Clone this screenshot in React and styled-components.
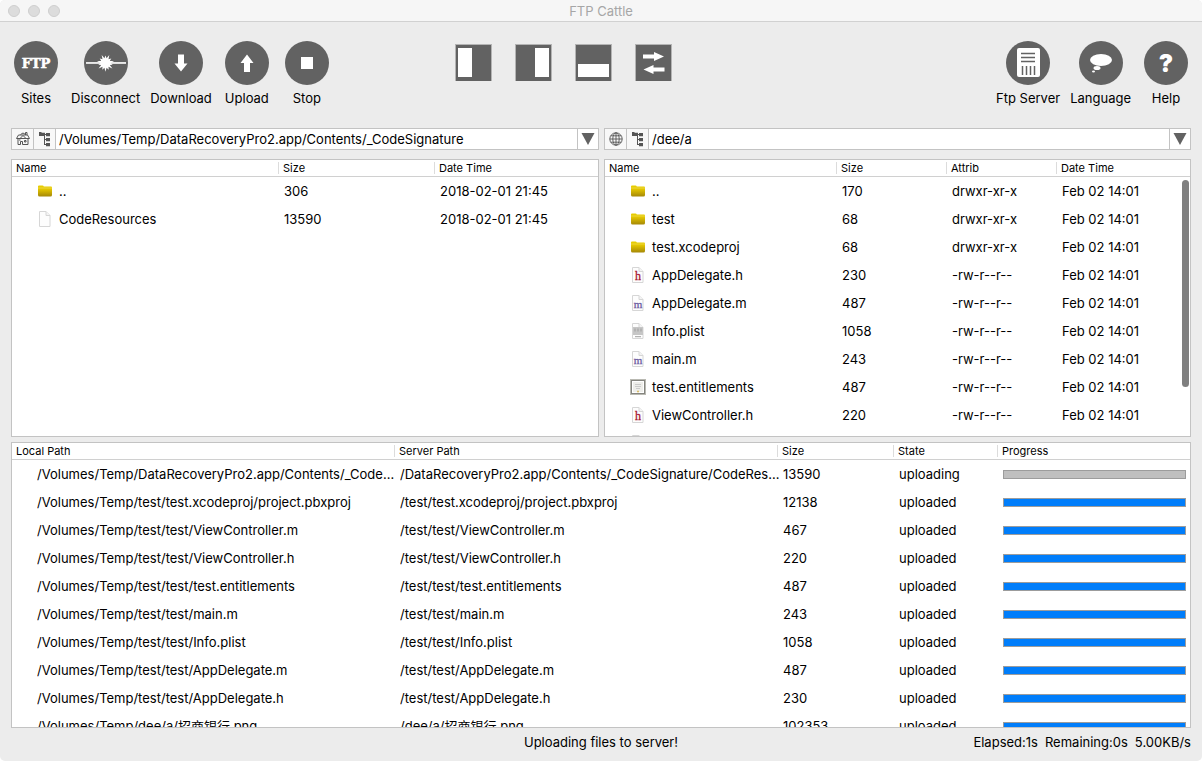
import React from "react";
import styled, { createGlobalStyle } from "styled-components";

const GlobalStyle = createGlobalStyle`
  *, *::before, *::after { box-sizing: border-box; }
  body {
    margin: 0;
    background: #fff;
    color: #000;
    font-family: Inter, "Noto Sans CJK SC", sans-serif;
    font-size: 13px;
    line-height: 16px;
  }
  button, input { font: inherit; color: inherit; }
`;

const Window = styled.div`
  display: flex;
  flex-direction: column;
  height: 100vh;
  min-height: 420px;
  background: #ececec;
  border-radius: 5px;
  overflow: hidden;
`;

const TitleBar = styled.header`
  display: grid;
  grid-template-columns: 1fr auto 1fr;
  align-items: center;
  flex: none;
  height: 22px;
  padding: 0 8px;
  background: #f6f6f6;
  border-bottom: 1px solid #d1d1d1;
`;

const Lights = styled.div`
  display: flex;
  gap: 8px;
`;

const Light = styled.button`
  width: 12px;
  height: 12px;
  padding: 0;
  border: 1px solid #cecece;
  border-radius: 50%;
  background: #dcdcdc;
`;

const Title = styled.h1`
  margin: 0;
  font-size: 13px;
  font-weight: 400;
  color: #a6a6a6;
`;

const Toolbar = styled.nav`
  display: flex;
  flex: none;
  align-items: flex-start;
  height: 106px;
  padding: 19px 11px 0;
`;

const ToolGroup = styled.div`
  display: flex;
  gap: 10px;
  margin-left: ${(p) => (p.$end ? "auto" : "0")};
`;

const ToolButton = styled.button`
  display: flex;
  flex-direction: column;
  align-items: center;
  gap: 5px;
  min-width: 50px;
  padding: 0;
  border: 0;
  background: none;
`;

const ViewGroup = styled.div`
  display: flex;
  gap: 23px;
  margin: 3px 0 0 123px;
`;

const ViewButton = styled.button`
  display: block;
  width: 37px;
  height: 37px;
  padding: 0;
  border: 0;
  background: none;

  svg { display: block; }
`;

const Main = styled.main`
  display: grid;
  flex: 1;
  min-height: 0;
  grid-template-rows: 22px minmax(0, 292fr) minmax(0, 286fr);
  padding: 0 11px;
`;

const Split = styled.div`
  display: grid;
  grid-template-columns: minmax(0, 588fr) minmax(0, 587fr);
  gap: 5px;
  min-height: 0;
`;

const Lists = styled(Split)`
  padding: 9px 0 5px;
`;

const PathBar = styled.div`
  display: flex;
  height: 22px;
  border: 1px solid #c3c3c3;
  background: #fff;
`;

const PathButton = styled.button`
  display: grid;
  place-items: center;
  flex: none;
  width: ${(p) => (p.$last ? 21 : 22)}px;
  padding: 0;
  border: solid #c3c3c3;
  border-width: 0 ${(p) => (p.$last ? 0 : 1)}px 0 ${(p) => (p.$last ? 1 : 0)}px;
  background: ${(p) => (p.$last ? "#fff" : "#f8f8f8")};
`;

const PathInput = styled.input`
  flex: 1;
  min-width: 0;
  padding: 0 3px;
  border: 0;
  outline: 0;
  background: #fff;
`;

const Panel = styled.section`
  position: relative;
  min-height: 0;
  overflow: hidden;
  border: 1px solid #c3c3c3;
  background: #fff;
`;

const ScrollThumb = styled.div`
  position: absolute;
  top: 20px;
  right: 1px;
  width: 7px;
  height: 207px;
  border-radius: 4px;
  background: #7f7f7f;
`;

const Table = styled.table`
  width: 100%;
  table-layout: fixed;
  border-collapse: separate;
  border-spacing: 0;
`;

const HeadCell = styled.th`
  position: relative;
  height: 17px;
  padding: 0 4px;
  border-bottom: 1px solid #d0d0d0;
  font-size: 11px;
  font-weight: 400;
  line-height: 16px;
  text-align: left;

  &:not(:last-child)::after {
    content: "";
    position: absolute;
    top: 2px;
    bottom: 2px;
    right: 0;
    width: 1px;
    background: #dcdcdc;
  }
`;

const Cell = styled.td`
  height: 28px;
  padding: 0 ${(p) => p.$end || 0}px 0 ${(p) => p.$indent || 5}px;
  white-space: nowrap;
`;

/* Long paths may use part of the next cell's left padding before they are elided. */
const PathText = styled.div`
  margin-right: -3px;
  overflow: hidden;
  text-overflow: ellipsis;
`;

const FileName = styled.div`
  display: flex;
  align-items: center;
  gap: 6px;

  svg { flex: none; }
`;

const Bar = styled.progress`
  display: block;
  width: 100%;
  height: 9px;
  appearance: none;
  border: 1px solid #9c9c9c;
  background: #bfbfbf;

  &::-webkit-progress-bar { background: #bfbfbf; }
  &::-webkit-progress-value { background: #007dfa; }
`;

const StatusBar = styled.footer`
  display: grid;
  grid-template-columns: 1fr auto 1fr;
  align-items: center;
  flex: none;
  height: 33px;
  padding: 0 11px 5px;
`;

const Stats = styled.div`
  display: flex;
  justify-content: flex-end;
  gap: 7px;
`;

/* Toolbar drawings: a 44px disc with a white symbol on it. */
function Disc({ children }) {
  return (
    <svg width="44" height="44" viewBox="0 0 44 44" aria-hidden="true">
      <circle cx="22" cy="22" r="22" fill="#626262" />
      <g fill="#fff">{children}</g>
    </svg>
  );
}

const burst = Array.from({ length: 28 }, (_, i) => {
  const angle = (i * Math.PI) / 14;
  const r = i % 2 ? 4.8 : i % 4 ? 8.8 : 7.4;
  return `${(21.5 + r * Math.sin(angle)).toFixed(2)},${(22 - r * Math.cos(angle)).toFixed(2)}`;
}).join(" ");

const discs = {
  sites: (
    <text x="22" y="27" textAnchor="middle" fontFamily="'DejaVu Serif', serif" fontWeight="700" fontSize="13" stroke="#fff" strokeWidth="0.500">FTP</text>
  ),
  disconnect: (
    <>
      <rect x="2" y="21" width="40" height="2" fill="#c8c8c8" />
      <rect x="2" y="21.400" width="40" height="1" />
      <polygon points={burst} />
    </>
  ),
  download: <path d="M19 13.500h6v9h3.500L22 30.500l-6.500-8H19z" />,
  upload: <path d="M19 31h6v-9h3.500L22 13.500l-6.500 8.500H19z" />,
  stop: <rect x="16" y="16" width="12" height="12" />,
  server: (
    <>
      <rect x="11" y="7" width="23" height="29" rx="2" />
      <path d="M15 12.500h14M15 16.500h14M15 20.500h14" stroke="#626262" strokeWidth="1.500" />
      <path d="M16.500 25v9M20.500 25v9M24.500 25v9M28.500 25v9" stroke="#626262" strokeWidth="1.500" />
    </>
  ),
  language: (
    <>
      <ellipse cx="22" cy="19" rx="11" ry="6" />
      <ellipse cx="18" cy="27" rx="3.500" ry="2" />
      <ellipse cx="14.500" cy="30.500" rx="1.500" ry="1" />
    </>
  ),
  help: (
    <text x="22" y="31" textAnchor="middle" fontFamily="Inter, sans-serif" fontWeight="900" fontSize="24">?</text>
  ),
};

function Tool({ icon, label }) {
  return (
    <ToolButton type="button">
      <Disc>{discs[icon]}</Disc>
      <span>{label}</span>
    </ToolButton>
  );
}

const views = {
  "Local pane": <rect x="3" y="4" width="14" height="29" />,
  "Server pane": <rect x="20" y="4" width="14" height="29" />,
  "Queue pane": <rect x="3" y="20" width="31" height="13" />,
  "Swap panes": (
    <path d="M8 10.500h11V8l10 4.500-10 4.500v-2.500H8zM29.500 27.500h-11V30l-10-4.500 10-4.500v2.500h11z" />
  ),
};

function View({ name }) {
  return (
    <ViewButton type="button" aria-label={name}>
      <svg width="37" height="37" viewBox="0 0 37 37">
        <rect width="37" height="37" fill="#b4b4b4" />
        <rect x="1" y="1" width="35" height="36" fill="#626262" />
        <g fill="#fff">{views[name]}</g>
      </svg>
    </ViewButton>
  );
}

const HomeIcon = () => (
  <svg width="14" height="14" viewBox="0 0 14 14" fill="none" stroke="#555" aria-hidden="true">
    <path d="M0.500 6.500 2.500 3h9l2 3.500zM9.500 3V0.500h1.500V3M4.500 2.500 7 1l2.500 1.500M2 6.500v6h2.500v-3h2v3H12v-6" />
    <path d="M4 6.500 7 3.500l3 3M8.500 8.500h1.500v1.500H8.500zM3 8h1.500" />
  </svg>
);

const TreeIcon = () => (
  <svg width="12" height="16" viewBox="0 0 12 16" fill="#555" aria-hidden="true">
    <path d="M0 1h2l1 .8h3V5H0zM7 2h4v3.200H7zM7 7h4v3.200H7zM7 12h4v3.200H7z" />
    <path d="M5.500 4v9.500M5 8.500h3M5 13.500h3M5 3.500h3" fill="none" stroke="#555" />
  </svg>
);

const GlobeIcon = () => (
  <svg width="14" height="14" viewBox="0 0 14 14" fill="none" stroke="#555" strokeWidth="0.900" aria-hidden="true">
    <circle cx="7" cy="7" r="6.200" />
    <ellipse cx="7" cy="7" rx="3.200" ry="6.200" />
    <path d="M7 .8v12.400M.8 7h12.400M1.800 3.800h10.400M1.800 10.200h10.400" />
  </svg>
);

const DropIcon = () => (
  <svg width="14" height="12" viewBox="0 0 14 12" fill="#626262" aria-hidden="true">
    <path d="M0.500 0h13L7 12z" />
  </svg>
);

function FileIcon({ kind }) {
  if (kind === "folder") {
    return (
      <svg width="16" height="16" viewBox="0 0 16 16" aria-hidden="true">
        <defs>
          <linearGradient id="folder" x1="0" y1="0" x2="0" y2="1">
            <stop offset="0" stopColor="#e8cf00" />
            <stop offset="0.350" stopColor="#e2c400" />
            <stop offset="1" stopColor="#a58808" />
          </linearGradient>
        </defs>
        <path d="M1 3.500q0-1 1-1h3.500q1 0 1.300 1H14q1 0 1 1V12q0 1.500-1.500 1.500h-11Q1 13.500 1 12z" fill="url(#folder)" />
        <path d="M1 5h14" stroke="#f4e36a" strokeWidth="0.600" />
      </svg>
    );
  }
  if (kind === "cert") {
    return (
      <svg width="16" height="16" viewBox="0 0 16 16" aria-hidden="true">
        <rect width="16" height="16" fill="#b9b9b2" />
        <rect x="1.500" y="1.500" width="13" height="13" fill="#fff" stroke="#85857f" />
        <rect x="3" y="3" width="10" height="10" fill="#eeeeea" />
        <path d="M5 5.500h6M5 7.500h6M6 9.500h4" stroke="#bbb" strokeWidth="0.700" />
        <circle cx="8" cy="12.500" r="1" fill="#d8b960" />
      </svg>
    );
  }
  return (
    <svg width="16" height="16" viewBox="0 0 16 16" aria-hidden="true">
      <path d="M2.500 .5h6.500l4 4v11H2.500z" fill="#fdfdfd" stroke="#d6d6d6" />
      <path d="M9 .5v4h4" fill="#f4f4f4" stroke="#d6d6d6" />
      {kind === "plist" && (
        <g fill="#c6c6c6">
          <rect x="3" y="4" width="10" height="8" />
          <path d="M5 13h6v1.200H5zM4 5.500h2v3H4zM7 5.500h2v3H7zM10 5.500h2v3h-2z" fill="#b2b2b2" />
        </g>
      )}
      {(kind === "h" || kind === "m") && (
        <text
          x="8"
          y="13"
          textAnchor="middle"
          fontFamily="'Liberation Serif', serif"
          fontSize={kind === "h" ? 12 : 11}
          fill={kind === "h" ? "#a8152f" : "#6a5a9e"}
          stroke={kind === "h" ? "#a8152f" : "#6a5a9e"}
          strokeWidth="0.300"
        >
          {kind}
        </text>
      )}
    </svg>
  );
}

function Columns({ columns }) {
  return (
    <>
      <colgroup>
        {columns.map(([name, width]) => (
          <col key={name} width={width} />
        ))}
      </colgroup>
      <thead>
        <tr>
          {columns.map(([name]) => (
            <HeadCell key={name} scope="col">{name}</HeadCell>
          ))}
        </tr>
      </thead>
    </>
  );
}

function FileTable({ label, columns, files }) {
  return (
    <Table aria-label={label}>
      <Columns columns={columns} />
      <tbody>
        {files.map(([kind, name, ...rest]) => (
          <tr key={name}>
            <Cell $indent={25}>
              <FileName>
                <FileIcon kind={kind} />
                {name}
              </FileName>
            </Cell>
            {rest.map((value, i) => (
              <Cell key={i}>{value}</Cell>
            ))}
          </tr>
        ))}
      </tbody>
    </Table>
  );
}

function Path({ label, icon, value }) {
  return (
    <PathBar>
      <PathButton type="button" aria-label={`${label} root`}>{icon}</PathButton>
      <PathButton type="button" aria-label={`${label} tree`}><TreeIcon /></PathButton>
      <PathInput aria-label={`${label} path`} defaultValue={value} />
      <PathButton type="button" aria-label={`${label} history`} $last><DropIcon /></PathButton>
    </PathBar>
  );
}

const localColumns = [["Name", 267], ["Size", 156], ["Date Time"]];
const localFiles = [
  ["folder", "..", "306", "2018-02-01 21:45"],
  ["file", "CodeResources", "13590", "2018-02-01 21:45"],
];

const serverColumns = [["Name", 232], ["Size", 110], ["Attrib", 110], ["Date Time"]];
const serverFiles = [
  ["folder", "..", "170", "drwxr-xr-x"],
  ["folder", "test", "68", "drwxr-xr-x"],
  ["folder", "test.xcodeproj", "68", "drwxr-xr-x"],
  ["h", "AppDelegate.h", "230", "-rw-r--r--"],
  ["m", "AppDelegate.m", "487", "-rw-r--r--"],
  ["plist", "Info.plist", "1058", "-rw-r--r--"],
  ["m", "main.m", "243", "-rw-r--r--"],
  ["cert", "test.entitlements", "487", "-rw-r--r--"],
  ["h", "ViewController.h", "220", "-rw-r--r--"],
  ["m", "ViewController.m", "467", "-rw-r--r--"],
].map((file) => [...file, "Feb 02 14:01"]);

const queueColumns = [["Local Path", 383], ["Server Path", 383], ["Size", 116], ["State", 104], ["Progress"]];
const queue = [
  ["/Volumes/Temp/DataRecoveryPro2.app/Contents/_CodeSignature/CodeResources", "/DataRecoveryPro2.app/Contents/_CodeSignature/CodeResources", "13590", 0],
  ["/Volumes/Temp/test/test.xcodeproj/project.pbxproj", "/test/test.xcodeproj/project.pbxproj", "12138", 1],
  ["/Volumes/Temp/test/test/ViewController.m", "/test/test/ViewController.m", "467", 1],
  ["/Volumes/Temp/test/test/ViewController.h", "/test/test/ViewController.h", "220", 1],
  ["/Volumes/Temp/test/test/test.entitlements", "/test/test/test.entitlements", "487", 1],
  ["/Volumes/Temp/test/test/main.m", "/test/test/main.m", "243", 1],
  ["/Volumes/Temp/test/test/Info.plist", "/test/test/Info.plist", "1058", 1],
  ["/Volumes/Temp/test/test/AppDelegate.m", "/test/test/AppDelegate.m", "487", 1],
  ["/Volumes/Temp/test/test/AppDelegate.h", "/test/test/AppDelegate.h", "230", 1],
  ["/Volumes/Temp/dee/a/招商银行.png", "/dee/a/招商银行.png", "102353", 1],
];

export default function App() {
  return (
    <>
      <GlobalStyle />
      <Window>
        <TitleBar>
          <Lights>
            <Light type="button" aria-label="Close" />
            <Light type="button" aria-label="Minimize" />
            <Light type="button" aria-label="Zoom" />
          </Lights>
          <Title>FTP Cattle</Title>
        </TitleBar>

        <Toolbar aria-label="Tools">
          <ToolGroup>
            <Tool icon="sites" label="Sites" />
            <Tool icon="disconnect" label="Disconnect" />
            <Tool icon="download" label="Download" />
            <Tool icon="upload" label="Upload" />
            <Tool icon="stop" label="Stop" />
          </ToolGroup>
          <ViewGroup>
            {Object.keys(views).map((name) => (
              <View key={name} name={name} />
            ))}
          </ViewGroup>
          <ToolGroup $end>
            <Tool icon="server" label="Ftp Server" />
            <Tool icon="language" label="Language" />
            <Tool icon="help" label="Help" />
          </ToolGroup>
        </Toolbar>

        <Main>
          <Split>
            <Path label="Local" icon={<HomeIcon />} value="/Volumes/Temp/DataRecoveryPro2.app/Contents/_CodeSignature" />
            <Path label="Server" icon={<GlobeIcon />} value="/dee/a" />
          </Split>
          <Lists>
            <Panel>
              <FileTable label="Local files" columns={localColumns} files={localFiles} />
            </Panel>
            <Panel>
              <FileTable label="Server files" columns={serverColumns} files={serverFiles} />
              <ScrollThumb />
            </Panel>
          </Lists>
          <Panel>
            <Table aria-label="Transfers">
              <Columns columns={queueColumns} />
              <tbody>
                {queue.map(([local, server, size, done]) => (
                  <tr key={local}>
                    <Cell $indent={25}><PathText>{local}</PathText></Cell>
                    <Cell><PathText>{server}</PathText></Cell>
                    <Cell>{size}</Cell>
                    <Cell>{done ? "uploaded" : "uploading"}</Cell>
                    <Cell $end={4}>
                      <Bar value={done} max={1} aria-label={`Progress of ${local}`} />
                    </Cell>
                  </tr>
                ))}
              </tbody>
            </Table>
          </Panel>
        </Main>

        <StatusBar>
          <span />
          <span>Uploading files to server!</span>
          <Stats>
            <span>Elapsed:1s</span>
            <span>Remaining:0s</span>
            <span>5.00KB/s</span>
          </Stats>
        </StatusBar>
      </Window>
    </>
  );
}
